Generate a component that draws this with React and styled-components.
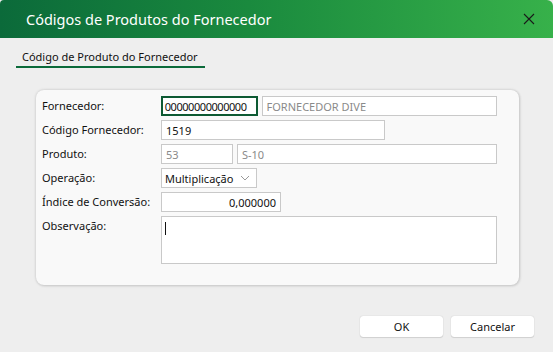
import React from 'react';
import styled, { createGlobalStyle } from 'styled-components';

const GlobalStyle = createGlobalStyle`
  html, body {
    margin: 0;
    padding: 0;
    background: #eeeeee;
  }
  body {
    font-family: 'Noto Sans', 'Open Sans', sans-serif;
    color: #111;
  }
`;

function CloseIcon() {
  return (
    <svg width="12" height="12" viewBox="0 0 12 12">
      <path d="M1 1 L11 11 M11 1 L1 11" stroke="#1a1a1a" strokeWidth="1.1" fill="none" />
    </svg>
  );
}

function ChevronIcon() {
  return (
    <svg width="10" height="6" viewBox="0 0 10 6">
      <path d="M1 1 L5 5 L9 1" stroke="#999" strokeWidth="1" fill="none" />
    </svg>
  );
}

function App() {
  return (
    <Window>
      <GlobalStyle />
      <TitleBar>
        <Title>Códigos de Produtos do Fornecedor</Title>
        <CloseButton>
          <CloseIcon />
        </CloseButton>
      </TitleBar>
      <TabBar>
        <Tab>Código de Produto do Fornecedor</Tab>
      </TabBar>
      <Panel>
        <Row>
          <Label>Fornecedor:</Label>
          <Field width={97} focused tight>
            00000000000000
          </Field>
          <Field width={236} disabled>
            FORNECEDOR DIVE
          </Field>
        </Row>
        <Row>
          <Label>Código Fornecedor:</Label>
          <Field width={224}>1519</Field>
        </Row>
        <Row>
          <Label>Produto:</Label>
          <Field width={72} disabled>
            53
          </Field>
          <Field width={260} disabled>
            S-10
          </Field>
        </Row>
        <Row>
          <Label>Operação:</Label>
          <Select>
            <span>Multiplicação</span>
            <ChevronIcon />
          </Select>
        </Row>
        <Row>
          <Label>Índice de Conversão:</Label>
          <Field width={120} align="right">
            0,000000
          </Field>
        </Row>
        <Row>
          <Label>Observação:</Label>
          <TextArea>
            <Caret />
          </TextArea>
        </Row>
      </Panel>
      <Footer>
        <Button>OK</Button>
        <Button>Cancelar</Button>
      </Footer>
    </Window>
  );
}

export default App;

const Window = styled.div`
  width: 553px;
  height: 352px;
  display: flex;
  flex-direction: column;
  background: #eeeeee;
  overflow: hidden;
`;

const TitleBar = styled.div`
  height: 38px;
  flex-shrink: 0;
  display: flex;
  align-items: center;
  justify-content: space-between;
  padding: 0 17px 0 26px;
  background: linear-gradient(90deg, #0b6a3a 0%, #1a8a3e 45%, #37b14a 100%);
  border-top-left-radius: 4px;
  border-top-right-radius: 6px;
`;

const Title = styled.h1`
  margin: 0 0 1px 0;
  font-size: 14.5px;
  font-weight: 400;
  color: #ffffff;
`;

const CloseButton = styled.div`
  display: flex;
  align-items: center;
  justify-content: center;
  width: 14px;
  height: 14px;
`;

const TabBar = styled.div`
  display: flex;
  padding: 11px 0 0 16px;
`;

const Tab = styled.div`
  font-size: 11px;
  line-height: 15px;
  padding: 0 6px 2px 6px;
  width: 189px;
  box-sizing: border-box;
  border-bottom: 2px solid #0b6a3a;
  color: #111;
  white-space: nowrap;
`;

const Panel = styled.div`
  margin: 22px 0 0 36px;
  width: 483px;
  height: 195px;
  box-sizing: border-box;
  padding: 6px 22px 0 6px;
  background: #f9f9f9;
  border-radius: 8px;
  box-shadow: 0 0 3px rgba(0, 0, 0, 0.18), 1px 1px 3px rgba(0, 0, 0, 0.1);
  display: flex;
  flex-direction: column;
  gap: 4px;
`;

const Row = styled.div`
  display: flex;
  align-items: flex-start;
  gap: 4px;
`;

const Label = styled.div`
  width: 115px;
  font-size: 11px;
  line-height: 20px;
  white-space: nowrap;
  color: #111;
`;

const Field = styled.div`
  width: ${(p) => p.width}px;
  height: 20px;
  box-sizing: border-box;
  display: flex;
  align-items: center;
  justify-content: ${(p) => (p.align === 'right' ? 'flex-end' : 'flex-start')};
  padding: 0 ${(p) => (p.focused ? 2 : 4)}px;
  font-size: 11px;
  letter-spacing: ${(p) => (p.tight ? '-0.45px' : '0')};
  background: #ffffff;
  border: ${(p) => (p.focused ? '2px solid #0d5a33' : '1px solid #c9c9c9')};
  color: ${(p) => (p.disabled ? '#8a8a8a' : '#111')};
  white-space: nowrap;
  overflow: hidden;
`;

const Select = styled.div`
  width: 96px;
  height: 20px;
  box-sizing: border-box;
  display: flex;
  align-items: center;
  justify-content: space-between;
  padding: 0 6px 0 3px;
  font-size: 11px;
  background: #ffffff;
  border: 1px solid #c9c9c9;
  color: #111;
  white-space: nowrap;
`;

const TextArea = styled.div`
  width: 336px;
  height: 48px;
  box-sizing: border-box;
  padding: 5px 3px;
  background: #ffffff;
  border: 1px solid #c9c9c9;
`;

const Caret = styled.div`
  width: 1px;
  height: 13px;
  background: #111;
`;

const Footer = styled.div`
  display: flex;
  justify-content: flex-end;
  gap: 8px;
  padding: 31px 19px 0 0;
`;

const Button = styled.button`
  width: 83px;
  height: 21px;
  border: none;
  border-radius: 3px;
  background: #ffffff;
  box-shadow: 0 0 1px rgba(0, 0, 0, 0.25), 0 1px 1px rgba(0, 0, 0, 0.1);
  font-family: 'Noto Sans', 'Open Sans', sans-serif;
  font-size: 11px;
  color: #111;
  padding: 0;
`;
